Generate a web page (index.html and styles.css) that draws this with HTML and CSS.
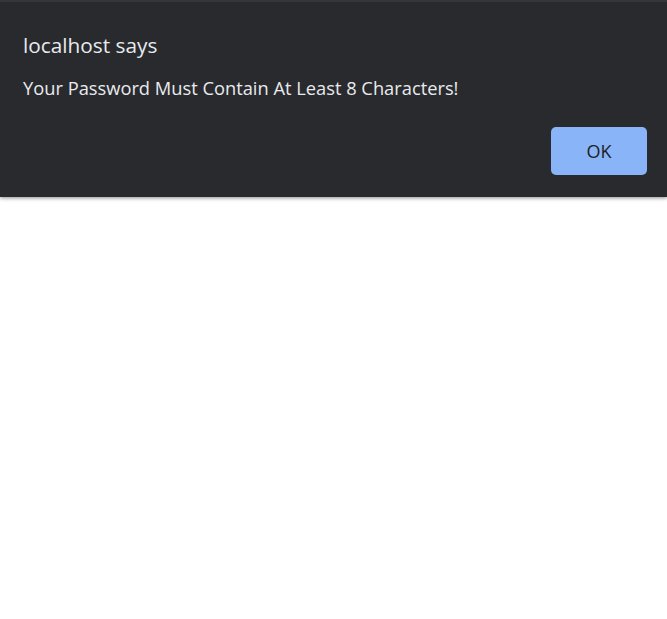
FILE: index.html
```html
<!DOCTYPE html>
<html>
<head>
<meta charset="utf-8">
<link rel="stylesheet" href="styles.css">
</head>
<body>
<div class="dialog">
  <div class="title">localhost says</div>
  <div class="message">Your Password Must Contain At Least 8 Characters!</div>
  <div class="actions"><button class="ok">OK</button></div>
</div>
</body>
</html>
```
FILE: styles.css
```css
html, body {
  margin: 0;
  padding: 0;
  background: #ffffff;
}
body {
  width: 667px;
  height: 619px;
  overflow: hidden;
  font-family: "Open Sans", "Noto Sans", sans-serif;
}
.dialog {
  box-sizing: border-box;
  width: 667px;
  height: 197px;
  background: #292a2d;
  border-top: 2px solid #35363a;
  box-shadow: 0 1px 4px rgba(0, 0, 0, 0.45);
  padding: 29px 20px 0 23px;
  display: flex;
  flex-direction: column;
}
.title {
  color: #e8eaed;
  font-size: 20.8px;
  line-height: 28px;
}
.message {
  color: #e8eaed;
  font-size: 18.3px;
  line-height: 24px;
  margin-top: 17px;
}
.actions {
  display: flex;
  justify-content: flex-end;
  margin-top: 27px;
}
.ok {
  width: 96px;
  height: 48px;
  border: none;
  border-radius: 5px;
  background: #8ab4f8;
  color: #202124;
  font-family: "Open Sans", "Noto Sans", sans-serif;
  font-size: 18px;
  font-weight: 500;
  padding: 0;
}
```
